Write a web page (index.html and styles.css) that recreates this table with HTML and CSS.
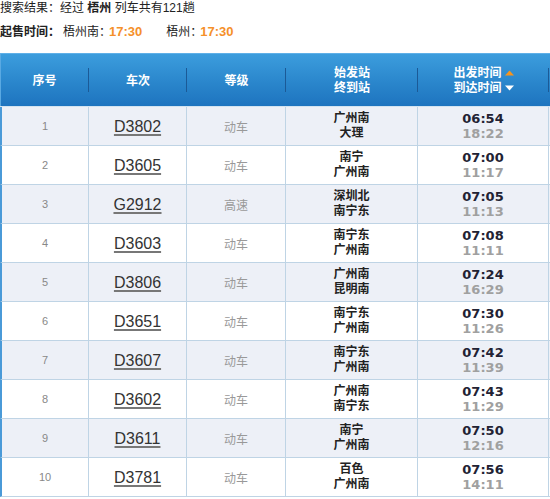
FILE: index.html
```html
<!DOCTYPE html>
<html lang="zh-CN">
<head>
<meta charset="utf-8">
<title>列车查询</title>
<link rel="stylesheet" href="styles.css">
</head>
<body>
<div class="summary">搜索结果：经过 <b>梧州</b> 列车共有121趟</div>
<div class="sale"><b class="lbl">起售时间：</b><span class="st">梧州南：</span><span class="time">17:30</span><span class="st st2">梧州：</span><span class="time">17:30</span></div>

<div class="table">
  <div class="thead">
    <div class="th">序号</div>
    <div class="th">车次</div>
    <div class="th">等级</div>
    <div class="th two"><span>始发站</span><span>终到站</span></div>
    <div class="th two"><span>出发时间<svg class="arr" width="9" height="6" viewBox="0 0 9 6"><path d="M0 5.5 L4.5 0.5 L9 5.5 Z" fill="#f7941d"/></svg></span><span>到达时间<svg class="arr" width="9" height="6" viewBox="0 0 9 6"><path d="M0 0.5 L4.5 5.5 L9 0.5 Z" fill="#ffffff"/></svg></span></div>
    <div class="th last"></div>
  </div>
  <div class="tbody">
    <div class="tr odd"><div class="td idx">1</div><div class="td no"><a>D3802</a></div><div class="td grade">动车</div><div class="td stn"><span>广州南</span><span>大理</span></div><div class="td tm"><span class="dep">06:54</span><span class="arv">18:22</span></div><div class="td last"></div></div>
    <div class="tr"><div class="td idx">2</div><div class="td no"><a>D3605</a></div><div class="td grade">动车</div><div class="td stn"><span>南宁</span><span>广州南</span></div><div class="td tm"><span class="dep">07:00</span><span class="arv">11:17</span></div><div class="td last"></div></div>
    <div class="tr odd"><div class="td idx">3</div><div class="td no"><a>G2912</a></div><div class="td grade">高速</div><div class="td stn"><span>深圳北</span><span>南宁东</span></div><div class="td tm"><span class="dep">07:05</span><span class="arv">11:13</span></div><div class="td last"></div></div>
    <div class="tr"><div class="td idx">4</div><div class="td no"><a>D3603</a></div><div class="td grade">动车</div><div class="td stn"><span>南宁东</span><span>广州南</span></div><div class="td tm"><span class="dep">07:08</span><span class="arv">11:11</span></div><div class="td last"></div></div>
    <div class="tr odd"><div class="td idx">5</div><div class="td no"><a>D3806</a></div><div class="td grade">动车</div><div class="td stn"><span>广州南</span><span>昆明南</span></div><div class="td tm"><span class="dep">07:24</span><span class="arv">16:29</span></div><div class="td last"></div></div>
    <div class="tr"><div class="td idx">6</div><div class="td no"><a>D3651</a></div><div class="td grade">动车</div><div class="td stn"><span>南宁东</span><span>广州南</span></div><div class="td tm"><span class="dep">07:30</span><span class="arv">11:26</span></div><div class="td last"></div></div>
    <div class="tr odd"><div class="td idx">7</div><div class="td no"><a>D3607</a></div><div class="td grade">动车</div><div class="td stn"><span>南宁东</span><span>广州南</span></div><div class="td tm"><span class="dep">07:42</span><span class="arv">11:39</span></div><div class="td last"></div></div>
    <div class="tr"><div class="td idx">8</div><div class="td no"><a>D3602</a></div><div class="td grade">动车</div><div class="td stn"><span>广州南</span><span>南宁东</span></div><div class="td tm"><span class="dep">07:43</span><span class="arv">11:29</span></div><div class="td last"></div></div>
    <div class="tr odd"><div class="td idx">9</div><div class="td no"><a>D3611</a></div><div class="td grade">动车</div><div class="td stn"><span>南宁</span><span>广州南</span></div><div class="td tm"><span class="dep">07:50</span><span class="arv">12:16</span></div><div class="td last"></div></div>
    <div class="tr"><div class="td idx">10</div><div class="td no"><a>D3781</a></div><div class="td grade">动车</div><div class="td stn"><span>百色</span><span>广州南</span></div><div class="td tm"><span class="dep">07:56</span><span class="arv">14:11</span></div><div class="td last"></div></div>
  </div>
</div>
</body>
</html>
```

FILE: styles.css
```css
html, body {
  margin: 0;
  padding: 0;
  overflow: hidden;
  background: #ffffff;
}
body {
  font-family: "Liberation Sans", "Noto Sans CJK SC", sans-serif;
  font-size: 12px;
  color: #222222;
}
.summary {
  line-height: 17px;
  height: 17px;
  white-space: nowrap;
}
.sale {
  margin-top: 7px;
  line-height: 16px;
  height: 16px;
  white-space: nowrap;
  display: flex;
  align-items: center;
}
.sale .lbl { font-weight: bold; }
.sale .st { margin-left: 3px; }
.sale .st2 { margin-left: 24px; }
.sale .time {
  color: #f5902a;
  font-weight: bold;
  font-size: 13px;
  margin-left: -2px;
}

.table {
  margin-top: 13px;
  width: 609px;
}
.thead, .tr {
  display: grid;
  grid-template-columns: 89px 98px 99px 132px 131px 60px;
}
.thead {
  height: 54px;
  background: linear-gradient(#3c9ddd, #2a86cc 55%, #1e74bf);
  border-top: 1px solid #5fb0e8;
  border-bottom: 1px solid #d3e3f0;
  box-sizing: border-box;
}
.th {
  color: #ffffff;
  font-weight: bold;
  display: flex;
  flex-direction: column;
  align-items: center;
  justify-content: center;
  line-height: 15px;
  padding-top: 2px;
  background: linear-gradient(#1b5a97, #1b5a97) right center / 1px 24px no-repeat;
}
.th:first-child {
  box-shadow: inset 1px 0 0 #5aa9e2;
}
.th.last { background: none; }
.arr {
  margin-left: 3px;
  vertical-align: 1px;
}

.tr {
  height: 39px;
  background: #ffffff;
}
.tr.odd { background: #edf0f7; }
.td {
  box-sizing: border-box;
  border-right: 1px solid #bfd4e5;
  border-bottom: 1px solid #bfd4e5;
  display: flex;
  flex-direction: column;
  align-items: center;
  justify-content: center;
}
.td:first-child {
  border-left: 2px solid #4a9ad8;
}
.td.last { border-right: none; }
.idx {
  color: #888888;
  font-size: 11px;
}
.no a {
  font-size: 16px;
  color: #333333;
  text-decoration: underline;
  text-decoration-color: #777777;
  text-decoration-thickness: 2px;
  text-underline-offset: 2px;
  padding-top: 1px;
}
.grade {
  color: #999999;
}
.stn {
  font-weight: bold;
  line-height: 15px;
  color: #222222;
}
.tm {
  font-family: "DejaVu Sans", sans-serif;
  font-weight: bold;
  font-size: 13px;
  line-height: 15px;
}
.tm .dep { color: #222233; }
.tm .arv { color: #a0a0a0; }
```
